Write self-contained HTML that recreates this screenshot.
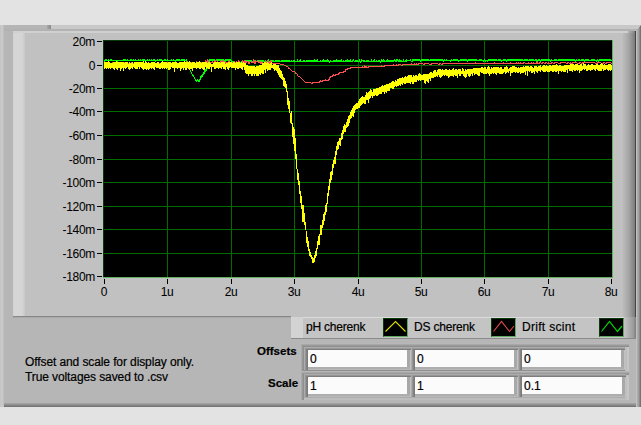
<!DOCTYPE html>
<html><head><meta charset="utf-8"><style>
*{margin:0;padding:0;box-sizing:border-box}
html,body{width:641px;height:425px;overflow:hidden;background:#e3e3e3;font-family:"Liberation Sans",sans-serif;color:#000;-webkit-text-stroke:0.2px #000}
.a{position:absolute}
.yl{position:absolute;right:546px;width:50px;text-align:right;font-size:12px;line-height:16px;letter-spacing:-0.3px;-webkit-text-stroke:0.05px #000}
.yt{position:absolute;left:97px;width:5px;height:1px;background:#000}
.xl{position:absolute;top:284px;width:40px;text-align:center;font-size:12px;line-height:16px;letter-spacing:-0.3px;-webkit-text-stroke:0.05px #000}
.xt{position:absolute;top:279px;width:1px;height:5px;background:#000}
.lt{position:absolute;top:317px;font-size:12px;line-height:20px;letter-spacing:-0.2px}
.sw{position:absolute;top:318px;width:25px;height:19px;background:#000;border-top:1px solid #0b3a0b;border-left:1px solid #0b3a0b;border-right:1px solid #5fa85f;border-bottom:1px solid #5fa85f}
.num{position:absolute;background:#fbfbfb;font-size:12px;line-height:19px;padding-left:2px}
</style></head><body>
<!-- outer frame -->
<div class="a" style="left:0;top:25px;width:641px;height:382px;background:#b6b6b6"></div>
<div class="a" style="left:0;top:25px;width:4px;height:382px;background:linear-gradient(90deg,#c2c2c2,#cbcbcb 50%,#bdbdbd)"></div>
<div class="a" style="left:4px;top:403px;width:637px;height:4px;background:linear-gradient(180deg,#a9a9a9,#6e6e6e)"></div>

<div class="a" style="left:4px;top:25px;width:44px;height:5px;background:#b5b5b5"></div>
<div class="a" style="left:47px;top:25px;width:4px;height:5px;background:linear-gradient(90deg,#a8a8a8,#8a8a8a)"></div>
<div class="a" style="left:51px;top:25px;width:590px;height:4px;background:#c8c8c8"></div>
<div class="a" style="left:4px;top:29px;width:637px;height:2px;background:#b2b2b2"></div>
<div class="a" style="left:636px;top:25px;width:5px;height:382px;clip-path:polygon(0 6px,5px 0,5px 100%,0 100%);background:linear-gradient(90deg,#c2c2c2 0,#c0c0c0 1px,#b2b2b2 1px,#9a9a9a 3px,#686868 5px)"></div>
<!-- plot panel -->
<div class="a" style="left:13px;top:31px;width:623px;height:286px;background:#c1c1c1"></div>
<div class="a" style="left:13px;top:31px;width:12px;height:286px;background:linear-gradient(90deg,#d2d2d2 0,#d6d6d6 2px,#d5d5d5 9px,#c8c8c8 12px)"></div>
<div class="a" style="left:621px;top:31px;width:15px;height:286px;background:linear-gradient(90deg,#c4c4c4 0,#a4a4a4 8px,#7e7e7e 13.5px,#444 14px,#444 15px)"></div>
<div class="a" style="left:13px;top:31px;width:615px;height:2px;background:#d0d0d0"></div>
<div class="a" style="left:628px;top:31px;width:6px;height:2px;background:linear-gradient(90deg,#b4b4b4,#8a8a8a)"></div>
<div class="a" style="left:13px;top:316px;width:278px;height:1px;background:#888888"></div><div class="a" style="left:13px;top:317px;width:278px;height:1px;background:#a9a9a9"></div>
<!-- y labels/ticks -->
<div class="yl" style="top:34px">20m</div><div class="yt" style="top:41px"></div><div class="yl" style="top:58px">0</div><div class="yt" style="top:65px"></div><div class="yl" style="top:81px">-20m</div><div class="yt" style="top:88px"></div><div class="yl" style="top:104px">-40m</div><div class="yt" style="top:111px"></div><div class="yl" style="top:128px">-60m</div><div class="yt" style="top:135px"></div><div class="yl" style="top:152px">-80m</div><div class="yt" style="top:159px"></div><div class="yl" style="top:175px">-100m</div><div class="yt" style="top:182px"></div><div class="yl" style="top:199px">-120m</div><div class="yt" style="top:206px"></div><div class="yl" style="top:222px">-140m</div><div class="yt" style="top:229px"></div><div class="yl" style="top:246px">-160m</div><div class="yt" style="top:253px"></div><div class="yl" style="top:269px">-180m</div><div class="yt" style="top:276px"></div>
<div class="xl" style="left:84px">0</div><div class="xt" style="left:104px"></div><div class="xl" style="left:147px">1u</div><div class="xt" style="left:167px"></div><div class="xl" style="left:211px">2u</div><div class="xt" style="left:231px"></div><div class="xl" style="left:274px">3u</div><div class="xt" style="left:294px"></div><div class="xl" style="left:338px">4u</div><div class="xt" style="left:358px"></div><div class="xl" style="left:401px">5u</div><div class="xt" style="left:421px"></div><div class="xl" style="left:464px">6u</div><div class="xt" style="left:484px"></div><div class="xl" style="left:528px">7u</div><div class="xt" style="left:548px"></div><div class="xl" style="left:591px">8u</div><div class="xt" style="left:611px"></div>
<!-- plot -->
<svg class="a" style="left:0;top:0" width="641" height="425" viewBox="0 0 641 425">
<rect x="103" y="40" width="510" height="238" fill="#5fb05f"/>
<rect x="103" y="40" width="509" height="237" fill="#0a3a0a"/>
<rect x="104" y="41" width="508" height="236" fill="#000"/>
<rect x="167" y="41" width="1" height="236" fill="#006c00"/><rect x="231" y="41" width="1" height="236" fill="#006c00"/><rect x="294" y="41" width="1" height="236" fill="#006c00"/><rect x="358" y="41" width="1" height="236" fill="#006c00"/><rect x="421" y="41" width="1" height="236" fill="#006c00"/><rect x="484" y="41" width="1" height="236" fill="#006c00"/><rect x="548" y="41" width="1" height="236" fill="#006c00"/><rect x="104" y="65" width="508" height="1" fill="#006c00"/><rect x="104" y="88" width="508" height="1" fill="#006c00"/><rect x="104" y="111" width="508" height="1" fill="#006c00"/><rect x="104" y="135" width="508" height="1" fill="#006c00"/><rect x="104" y="159" width="508" height="1" fill="#006c00"/><rect x="104" y="182" width="508" height="1" fill="#006c00"/><rect x="104" y="206" width="508" height="1" fill="#006c00"/><rect x="104" y="229" width="508" height="1" fill="#006c00"/><rect x="104" y="253" width="508" height="1" fill="#006c00"/>
<clipPath id="pc"><rect x="104" y="41" width="508" height="236"/></clipPath>
<g clip-path="url(#pc)" shape-rendering="crispEdges">
<path d="M104 60h1V62h-1zM105 59h1V61h-1zM106 59h1V61h-1zM107 60h1V61h-1zM108 59h1V61h-1zM109 60h1V61h-1zM110 59h1V61h-1zM111 59h1V61h-1zM112 60h1V61h-1zM113 60h1V61h-1zM114 60h1V61h-1zM115 60h1V61h-1zM116 60h1V61h-1zM117 60h1V62h-1zM118 60h1V61h-1zM119 60h1V61h-1zM120 60h1V61h-1zM121 60h1V61h-1zM122 60h1V61h-1zM123 59h1V61h-1zM124 59h1V61h-1zM125 59h1V61h-1zM126 60h1V61h-1zM127 59h1V61h-1zM128 60h1V61h-1zM129 60h1V61h-1zM130 59h1V61h-1zM131 59h1V61h-1zM132 60h1V61h-1zM133 59h1V61h-1zM134 60h1V61h-1zM135 59h1V61h-1zM136 60h1V61h-1zM137 60h1V61h-1zM138 59h1V61h-1zM139 60h1V61h-1zM140 59h1V61h-1zM141 60h1V61h-1zM142 59h1V61h-1zM143 59h1V61h-1zM144 59h1V61h-1zM145 60h1V62h-1zM146 60h1V61h-1zM147 59h1V61h-1zM148 60h1V61h-1zM149 59h1V61h-1zM150 60h1V61h-1zM151 59h1V61h-1zM152 60h1V61h-1zM153 59h1V61h-1zM154 59h1V61h-1zM155 60h1V62h-1zM156 60h1V61h-1zM157 59h1V61h-1zM158 60h1V61h-1zM159 59h1V61h-1zM160 59h1V61h-1zM161 59h1V61h-1zM162 60h1V61h-1zM163 60h1V61h-1zM164 59h1V61h-1zM165 59h1V61h-1zM166 60h1V61h-1zM167 59h1V61h-1zM168 60h1V61h-1zM169 60h1V61h-1zM170 60h1V61h-1zM171 59h1V61h-1zM172 60h1V61h-1zM173 59h1V61h-1zM174 60h1V61h-1zM175 60h1V62h-1zM176 59h1V61h-1zM177 59h1V61h-1zM178 59h1V61h-1zM179 59h1V61h-1zM180 60h1V61h-1zM181 59h1V61h-1zM182 59h1V61h-1zM183 59h1V61h-1zM184 59h1V61h-1zM185 60h1V61h-1zM186 59h1V61h-1zM187 61h1V64h-1zM188 64h1V67h-1zM189 67h1V70h-1zM190 70h1V72h-1zM191 72h1V74h-1zM192 74h1V76h-1zM193 75h1V77h-1zM194 77h1V79h-1zM195 79h1V81h-1zM196 80h1V82h-1zM197 79h1V81h-1zM198 80h1V82h-1zM199 79h1V82h-1zM200 76h1V80h-1zM201 75h1V78h-1zM202 74h1V77h-1zM203 72h1V75h-1zM204 70h1V74h-1zM205 69h1V72h-1zM206 68h1V71h-1zM207 64h1V69h-1zM208 62h1V66h-1zM209 59h1V64h-1zM210 59h1V61h-1zM211 59h1V61h-1zM212 59h1V61h-1zM213 59h1V61h-1zM214 59h1V61h-1zM215 60h1V62h-1zM216 59h1V61h-1zM217 59h1V61h-1zM218 59h1V61h-1zM219 59h1V61h-1zM220 59h1V61h-1zM221 59h1V61h-1zM222 59h1V61h-1zM223 59h1V61h-1zM224 60h1V62h-1zM225 59h1V61h-1zM226 59h1V61h-1zM227 59h1V61h-1zM228 59h1V61h-1zM229 59h1V61h-1zM230 59h1V61h-1zM231 60h1V62h-1zM232 61h1V63h-1zM233 61h1V63h-1zM234 62h1V63h-1zM235 62h1V63h-1zM236 62h1V64h-1zM237 62h1V64h-1zM238 62h1V64h-1zM239 61h1V64h-1zM240 62h1V64h-1zM241 61h1V64h-1zM242 62h1V63h-1zM243 61h1V63h-1zM244 61h1V62h-1zM245 60h1V62h-1zM246 60h1V62h-1zM247 60h1V62h-1zM248 60h1V62h-1zM249 60h1V62h-1zM250 60h1V62h-1zM251 60h1V62h-1zM252 61h1V62h-1zM253 61h1V62h-1zM254 61h1V62h-1zM255 60h1V62h-1zM256 61h1V62h-1zM257 60h1V62h-1zM258 60h1V62h-1zM259 60h1V62h-1zM260 60h1V62h-1zM261 60h1V62h-1zM262 60h1V62h-1zM263 60h1V62h-1zM264 61h1V62h-1zM265 60h1V62h-1zM266 61h1V62h-1zM267 60h1V62h-1zM268 59h1V62h-1zM269 61h1V63h-1zM270 60h1V62h-1zM271 60h1V62h-1zM272 60h1V62h-1zM273 60h1V62h-1zM274 61h1V62h-1zM275 60h1V62h-1zM276 60h1V62h-1zM277 60h1V62h-1zM278 60h1V62h-1zM279 60h1V62h-1zM280 61h1V62h-1zM281 60h1V62h-1zM282 60h1V62h-1zM283 60h1V62h-1zM284 60h1V62h-1zM285 60h1V62h-1zM286 60h1V62h-1zM287 60h1V62h-1zM288 60h1V62h-1zM289 60h1V62h-1zM290 61h1V62h-1zM291 60h1V62h-1zM292 61h1V62h-1zM293 60h1V62h-1zM294 60h1V62h-1zM295 61h1V62h-1zM296 61h1V62h-1zM297 59h1V62h-1zM298 61h1V62h-1zM299 60h1V62h-1zM300 59h1V62h-1zM301 61h1V62h-1zM302 61h1V62h-1zM303 60h1V62h-1zM304 60h1V62h-1zM305 61h1V62h-1zM306 60h1V62h-1zM307 60h1V62h-1zM308 60h1V62h-1zM309 60h1V62h-1zM310 60h1V62h-1zM311 60h1V62h-1zM312 60h1V62h-1zM313 60h1V62h-1zM314 59h1V62h-1zM315 60h1V62h-1zM316 60h1V62h-1zM317 59h1V62h-1zM318 61h1V62h-1zM319 61h1V62h-1zM320 60h1V62h-1zM321 61h1V62h-1zM322 60h1V62h-1zM323 59h1V62h-1zM324 60h1V62h-1zM325 60h1V62h-1zM326 60h1V62h-1zM327 59h1V62h-1zM328 60h1V62h-1zM329 61h1V63h-1zM330 60h1V62h-1zM331 61h1V62h-1zM332 61h1V62h-1zM333 60h1V62h-1zM334 60h1V62h-1zM335 60h1V62h-1zM336 59h1V62h-1zM337 60h1V62h-1zM338 60h1V62h-1zM339 60h1V62h-1zM340 60h1V62h-1zM341 59h1V62h-1zM342 61h1V62h-1zM343 60h1V62h-1zM344 61h1V62h-1zM345 60h1V62h-1zM346 60h1V62h-1zM347 59h1V62h-1zM348 60h1V62h-1zM349 60h1V62h-1zM350 59h1V62h-1zM351 61h1V62h-1zM352 60h1V62h-1zM353 59h1V61h-1zM354 61h1V62h-1zM355 60h1V62h-1zM356 60h1V62h-1zM357 60h1V62h-1zM358 61h1V62h-1zM359 59h1V62h-1zM360 61h1V63h-1zM361 59h1V62h-1zM362 60h1V61h-1zM363 60h1V62h-1zM364 60h1V62h-1zM365 61h1V62h-1zM366 60h1V62h-1zM367 60h1V62h-1zM368 60h1V62h-1zM369 61h1V62h-1zM370 61h1V62h-1zM371 59h1V62h-1zM372 61h1V62h-1zM373 60h1V62h-1zM374 59h1V62h-1zM375 61h1V62h-1zM376 60h1V62h-1zM377 61h1V62h-1zM378 60h1V62h-1zM379 60h1V62h-1zM380 61h1V63h-1zM381 59h1V62h-1zM382 60h1V62h-1zM383 59h1V62h-1zM384 60h1V62h-1zM385 61h1V62h-1zM386 60h1V62h-1zM387 59h1V62h-1zM388 60h1V62h-1zM389 60h1V62h-1zM390 60h1V62h-1zM391 60h1V62h-1zM392 60h1V62h-1zM393 60h1V62h-1zM394 59h1V61h-1zM395 60h1V62h-1zM396 59h1V62h-1zM397 59h1V61h-1zM398 60h1V62h-1zM399 59h1V62h-1zM400 60h1V62h-1zM401 60h1V62h-1zM402 61h1V62h-1zM403 59h1V62h-1zM404 61h1V62h-1zM405 60h1V62h-1zM406 59h1V62h-1zM407 60h1V61h-1zM408 60h1V61h-1zM409 60h1V61h-1zM410 59h1V61h-1zM411 61h1V62h-1zM412 59h1V62h-1zM413 59h1V61h-1zM414 59h1V61h-1zM415 59h1V61h-1zM416 59h1V61h-1zM417 59h1V61h-1zM418 59h1V61h-1zM419 59h1V61h-1zM420 60h1V62h-1zM421 59h1V61h-1zM422 59h1V61h-1zM423 59h1V61h-1zM424 59h1V61h-1zM425 59h1V61h-1zM426 59h1V61h-1zM427 59h1V61h-1zM428 59h1V61h-1zM429 60h1V61h-1zM430 59h1V61h-1zM431 59h1V61h-1zM432 59h1V61h-1zM433 59h1V61h-1zM434 59h1V61h-1zM435 59h1V61h-1zM436 59h1V61h-1zM437 59h1V61h-1zM438 59h1V61h-1zM439 59h1V61h-1zM440 59h1V61h-1zM441 59h1V61h-1zM442 59h1V61h-1zM443 60h1V62h-1zM444 59h1V61h-1zM445 60h1V61h-1zM446 59h1V61h-1zM447 60h1V61h-1zM448 60h1V61h-1zM449 60h1V61h-1zM450 60h1V62h-1zM451 59h1V61h-1zM452 60h1V61h-1zM453 59h1V61h-1zM454 59h1V61h-1zM455 59h1V61h-1zM456 59h1V61h-1zM457 59h1V61h-1zM458 60h1V62h-1zM459 60h1V61h-1zM460 59h1V61h-1zM461 59h1V61h-1zM462 59h1V61h-1zM463 59h1V61h-1zM464 59h1V61h-1zM465 59h1V61h-1zM466 59h1V61h-1zM467 60h1V62h-1zM468 59h1V61h-1zM469 59h1V61h-1zM470 59h1V61h-1zM471 59h1V61h-1zM472 59h1V61h-1zM473 59h1V61h-1zM474 59h1V61h-1zM475 59h1V61h-1zM476 59h1V61h-1zM477 60h1V61h-1zM478 60h1V61h-1zM479 59h1V61h-1zM480 59h1V61h-1zM481 59h1V61h-1zM482 60h1V61h-1zM483 60h1V62h-1zM484 59h1V61h-1zM485 60h1V62h-1zM486 60h1V61h-1zM487 60h1V62h-1zM488 59h1V61h-1zM489 59h1V61h-1zM490 59h1V61h-1zM491 59h1V61h-1zM492 59h1V61h-1zM493 59h1V61h-1zM494 59h1V61h-1zM495 59h1V61h-1zM496 59h1V61h-1zM497 60h1V61h-1zM498 59h1V61h-1zM499 59h1V61h-1zM500 59h1V61h-1zM501 60h1V62h-1zM502 60h1V61h-1zM503 59h1V61h-1zM504 59h1V61h-1zM505 59h1V61h-1zM506 60h1V62h-1zM507 59h1V61h-1zM508 59h1V61h-1zM509 59h1V61h-1zM510 59h1V61h-1zM511 59h1V61h-1zM512 59h1V61h-1zM513 59h1V61h-1zM514 59h1V61h-1zM515 59h1V61h-1zM516 59h1V61h-1zM517 59h1V61h-1zM518 59h1V61h-1zM519 59h1V61h-1zM520 59h1V61h-1zM521 59h1V61h-1zM522 59h1V61h-1zM523 60h1V61h-1zM524 59h1V61h-1zM525 59h1V61h-1zM526 59h1V61h-1zM527 59h1V61h-1zM528 60h1V61h-1zM529 59h1V61h-1zM530 59h1V61h-1zM531 59h1V61h-1zM532 59h1V61h-1zM533 59h1V61h-1zM534 60h1V61h-1zM535 59h1V61h-1zM536 59h1V61h-1zM537 60h1V62h-1zM538 59h1V61h-1zM539 59h1V61h-1zM540 60h1V62h-1zM541 59h1V61h-1zM542 59h1V61h-1zM543 59h1V61h-1zM544 59h1V61h-1zM545 59h1V61h-1zM546 59h1V61h-1zM547 59h1V61h-1zM548 59h1V61h-1zM549 59h1V61h-1zM550 60h1V62h-1zM551 59h1V61h-1zM552 60h1V61h-1zM553 60h1V61h-1zM554 59h1V61h-1zM555 59h1V61h-1zM556 59h1V61h-1zM557 60h1V61h-1zM558 59h1V61h-1zM559 59h1V61h-1zM560 59h1V61h-1zM561 59h1V61h-1zM562 59h1V61h-1zM563 59h1V61h-1zM564 59h1V61h-1zM565 59h1V61h-1zM566 59h1V61h-1zM567 59h1V61h-1zM568 59h1V61h-1zM569 59h1V61h-1zM570 59h1V61h-1zM571 59h1V61h-1zM572 59h1V61h-1zM573 59h1V61h-1zM574 59h1V61h-1zM575 60h1V62h-1zM576 59h1V61h-1zM577 60h1V61h-1zM578 59h1V61h-1zM579 59h1V61h-1zM580 60h1V61h-1zM581 59h1V61h-1zM582 59h1V61h-1zM583 59h1V61h-1zM584 60h1V62h-1zM585 59h1V61h-1zM586 59h1V61h-1zM587 59h1V61h-1zM588 59h1V61h-1zM589 60h1V61h-1zM590 60h1V61h-1zM591 59h1V61h-1zM592 59h1V61h-1zM593 59h1V61h-1zM594 59h1V61h-1zM595 60h1V61h-1zM596 60h1V62h-1zM597 59h1V61h-1zM598 60h1V62h-1zM599 59h1V61h-1zM600 59h1V61h-1zM601 59h1V61h-1zM602 59h1V61h-1zM603 59h1V61h-1zM604 59h1V61h-1zM605 59h1V61h-1zM606 59h1V61h-1zM607 59h1V61h-1zM608 59h1V61h-1zM609 59h1V61h-1zM610 59h1V61h-1zM611 60h1V61h-1z" fill="#00ff00"/>
<path d="M104 62h1V63h-1zM105 62h1V63h-1zM106 62h1V63h-1zM107 63h1V64h-1zM108 63h1V64h-1zM109 63h1V64h-1zM110 63h1V64h-1zM111 63h1V64h-1zM112 62h1V64h-1zM113 63h1V64h-1zM114 63h1V64h-1zM115 63h1V64h-1zM116 63h1V64h-1zM117 63h1V64h-1zM118 62h1V64h-1zM119 62h1V63h-1zM120 63h1V64h-1zM121 62h1V64h-1zM122 62h1V63h-1zM123 62h1V63h-1zM124 62h1V63h-1zM125 63h1V64h-1zM126 63h1V64h-1zM127 62h1V64h-1zM128 63h1V64h-1zM129 63h1V64h-1zM130 63h1V64h-1zM131 62h1V64h-1zM132 62h1V63h-1zM133 63h1V64h-1zM134 63h1V64h-1zM135 63h1V64h-1zM136 63h1V64h-1zM137 63h1V64h-1zM138 63h1V64h-1zM139 63h1V64h-1zM140 62h1V64h-1zM141 63h1V64h-1zM142 63h1V64h-1zM143 63h1V64h-1zM144 63h1V64h-1zM145 63h1V64h-1zM146 63h1V64h-1zM147 63h1V64h-1zM148 62h1V64h-1zM149 63h1V64h-1zM150 63h1V64h-1zM151 63h1V64h-1zM152 63h1V64h-1zM153 62h1V64h-1zM154 63h1V64h-1zM155 63h1V64h-1zM156 63h1V64h-1zM157 63h1V64h-1zM158 63h1V64h-1zM159 63h1V64h-1zM160 63h1V64h-1zM161 63h1V64h-1zM162 63h1V64h-1zM163 63h1V64h-1zM164 63h1V64h-1zM165 63h1V64h-1zM166 62h1V64h-1zM167 62h1V63h-1zM168 63h1V64h-1zM169 63h1V64h-1zM170 62h1V64h-1zM171 63h1V64h-1zM172 63h1V64h-1zM173 63h1V64h-1zM174 62h1V64h-1zM175 63h1V64h-1zM176 63h1V64h-1zM177 63h1V64h-1zM178 63h1V64h-1zM179 63h1V64h-1zM180 63h1V64h-1zM181 62h1V64h-1zM182 62h1V63h-1zM183 62h1V63h-1zM184 62h1V63h-1zM185 62h1V63h-1zM186 61h1V63h-1zM187 62h1V64h-1zM188 62h1V64h-1zM189 63h1V64h-1zM190 63h1V64h-1zM191 62h1V64h-1zM192 63h1V64h-1zM193 63h1V64h-1zM194 63h1V64h-1zM195 63h1V64h-1zM196 61h1V64h-1zM197 62h1V64h-1zM198 62h1V64h-1zM199 62h1V63h-1zM200 62h1V63h-1zM201 62h1V63h-1zM202 63h1V64h-1zM203 63h1V64h-1zM204 63h1V64h-1zM205 60h1V64h-1zM206 61h1V63h-1zM207 59h1V63h-1zM208 60h1V62h-1zM209 62h1V63h-1zM210 62h1V63h-1zM211 62h1V63h-1zM212 61h1V63h-1zM213 62h1V64h-1zM214 61h1V64h-1zM215 60h1V62h-1zM216 60h1V61h-1zM217 61h1V64h-1zM218 62h1V64h-1zM219 62h1V63h-1zM220 60h1V63h-1zM221 61h1V63h-1zM222 60h1V63h-1zM223 61h1V63h-1zM224 63h1V64h-1zM225 61h1V64h-1zM226 62h1V63h-1zM227 62h1V63h-1zM228 60h1V63h-1zM229 61h1V63h-1zM230 62h1V63h-1zM231 63h1V64h-1zM232 62h1V64h-1zM233 62h1V63h-1zM234 61h1V63h-1zM235 62h1V63h-1zM236 61h1V63h-1zM237 62h1V64h-1zM238 60h1V64h-1zM239 61h1V63h-1zM240 63h1V64h-1zM241 62h1V64h-1zM242 60h1V63h-1zM243 61h1V63h-1zM244 60h1V63h-1zM245 61h1V63h-1zM246 61h1V63h-1zM247 61h1V62h-1zM248 62h1V64h-1zM249 61h1V64h-1zM250 61h1V62h-1zM251 62h1V63h-1zM252 62h1V63h-1zM253 59h1V63h-1zM254 60h1V64h-1zM255 61h1V64h-1zM256 61h1V62h-1zM257 61h1V62h-1zM258 62h1V63h-1zM259 60h1V63h-1zM260 61h1V64h-1zM261 62h1V64h-1zM262 62h1V63h-1zM263 63h1V64h-1zM264 62h1V64h-1zM265 61h1V63h-1zM266 62h1V63h-1zM267 60h1V63h-1zM268 61h1V64h-1zM269 62h1V64h-1zM270 60h1V63h-1zM271 61h1V63h-1zM272 63h1V64h-1zM273 63h1V64h-1zM274 63h1V64h-1zM275 63h1V64h-1zM276 63h1V64h-1zM277 63h1V64h-1zM278 63h1V64h-1zM279 63h1V64h-1zM280 64h1V65h-1zM281 64h1V65h-1zM282 64h1V65h-1zM283 64h1V65h-1zM284 65h1V66h-1zM285 65h1V66h-1zM286 66h1V67h-1zM287 66h1V67h-1zM288 67h1V69h-1zM289 68h1V69h-1zM290 69h1V70h-1zM291 70h1V71h-1zM292 71h1V72h-1zM293 71h1V72h-1zM294 71h1V72h-1zM295 72h1V74h-1zM296 73h1V74h-1zM297 74h1V76h-1zM298 76h1V77h-1zM299 76h1V77h-1zM300 77h1V78h-1zM301 78h1V79h-1zM302 79h1V80h-1zM303 80h1V81h-1zM304 81h1V82h-1zM305 82h1V83h-1zM306 82h1V83h-1zM307 82h1V83h-1zM308 82h1V83h-1zM309 82h1V83h-1zM310 82h1V83h-1zM311 83h1V84h-1zM312 82h1V84h-1zM313 82h1V83h-1zM314 82h1V83h-1zM315 82h1V83h-1zM316 82h1V83h-1zM317 82h1V83h-1zM318 82h1V83h-1zM319 81h1V83h-1zM320 80h1V82h-1zM321 81h1V82h-1zM322 80h1V82h-1zM323 80h1V81h-1zM324 80h1V81h-1zM325 79h1V81h-1zM326 80h1V81h-1zM327 80h1V81h-1zM328 79h1V81h-1zM329 77h1V80h-1zM330 76h1V78h-1zM331 76h1V77h-1zM332 75h1V77h-1zM333 74h1V76h-1zM334 75h1V76h-1zM335 74h1V76h-1zM336 74h1V75h-1zM337 74h1V75h-1zM338 73h1V75h-1zM339 72h1V74h-1zM340 72h1V73h-1zM341 72h1V73h-1zM342 72h1V73h-1zM343 71h1V73h-1zM344 71h1V72h-1zM345 69h1V72h-1zM346 69h1V70h-1zM347 68h1V70h-1zM348 68h1V69h-1zM349 68h1V69h-1zM350 67h1V69h-1zM351 67h1V68h-1zM352 67h1V68h-1zM353 67h1V68h-1zM354 67h1V68h-1zM355 67h1V68h-1zM356 67h1V68h-1zM357 67h1V68h-1zM358 67h1V68h-1zM359 67h1V68h-1zM360 67h1V68h-1zM361 67h1V68h-1zM362 66h1V68h-1zM363 67h1V68h-1zM364 65h1V68h-1zM365 66h1V68h-1zM366 66h1V68h-1zM367 67h1V68h-1zM368 66h1V68h-1zM369 66h1V67h-1zM370 66h1V67h-1zM371 66h1V67h-1zM372 66h1V67h-1zM373 66h1V67h-1zM374 66h1V67h-1zM375 66h1V67h-1zM376 66h1V67h-1zM377 66h1V67h-1zM378 66h1V67h-1zM379 66h1V67h-1zM380 66h1V67h-1zM381 65h1V67h-1zM382 66h1V67h-1zM383 66h1V67h-1zM384 65h1V67h-1zM385 65h1V66h-1zM386 65h1V66h-1zM387 65h1V66h-1zM388 65h1V66h-1zM389 65h1V66h-1zM390 65h1V66h-1zM391 65h1V66h-1zM392 65h1V66h-1zM393 64h1V66h-1zM394 65h1V66h-1zM395 65h1V66h-1zM396 64h1V66h-1zM397 65h1V66h-1zM398 64h1V66h-1zM399 64h1V65h-1zM400 64h1V65h-1zM401 65h1V66h-1zM402 64h1V66h-1zM403 64h1V65h-1zM404 64h1V65h-1zM405 64h1V65h-1zM406 64h1V65h-1zM407 64h1V65h-1zM408 64h1V65h-1zM409 64h1V65h-1zM410 64h1V65h-1zM411 63h1V65h-1zM412 64h1V65h-1zM413 64h1V65h-1zM414 63h1V65h-1zM415 64h1V65h-1zM416 63h1V65h-1zM417 64h1V65h-1zM418 63h1V65h-1zM419 63h1V64h-1zM420 63h1V64h-1zM421 63h1V64h-1zM422 63h1V64h-1zM423 64h1V65h-1zM424 63h1V65h-1zM425 63h1V64h-1zM426 63h1V64h-1zM427 63h1V64h-1zM428 63h1V64h-1zM429 64h1V65h-1zM430 64h1V65h-1zM431 63h1V65h-1zM432 63h1V64h-1zM433 63h1V64h-1zM434 63h1V64h-1zM435 63h1V64h-1zM436 63h1V64h-1zM437 63h1V64h-1zM438 64h1V65h-1zM439 63h1V65h-1zM440 63h1V64h-1zM441 64h1V65h-1zM442 63h1V65h-1zM443 63h1V64h-1zM444 63h1V64h-1zM445 63h1V64h-1zM446 63h1V64h-1zM447 63h1V64h-1zM448 63h1V64h-1zM449 63h1V64h-1zM450 63h1V64h-1zM451 63h1V64h-1zM452 63h1V64h-1zM453 63h1V64h-1zM454 63h1V64h-1zM455 63h1V64h-1zM456 63h1V64h-1zM457 63h1V64h-1zM458 63h1V64h-1zM459 63h1V64h-1zM460 63h1V64h-1zM461 63h1V64h-1zM462 63h1V64h-1zM463 63h1V64h-1zM464 63h1V64h-1zM465 63h1V64h-1zM466 63h1V64h-1zM467 63h1V64h-1zM468 63h1V64h-1zM469 63h1V64h-1zM470 63h1V64h-1zM471 63h1V64h-1zM472 63h1V64h-1zM473 63h1V64h-1zM474 63h1V64h-1zM475 62h1V64h-1zM476 63h1V64h-1zM477 63h1V64h-1zM478 63h1V64h-1zM479 63h1V64h-1zM480 63h1V64h-1zM481 63h1V64h-1zM482 63h1V64h-1zM483 63h1V64h-1zM484 63h1V64h-1zM485 63h1V64h-1zM486 63h1V64h-1zM487 63h1V64h-1zM488 63h1V64h-1zM489 63h1V64h-1zM490 63h1V64h-1zM491 63h1V64h-1zM492 63h1V64h-1zM493 63h1V64h-1zM494 62h1V64h-1zM495 63h1V64h-1zM496 63h1V64h-1zM497 63h1V64h-1zM498 63h1V64h-1zM499 63h1V64h-1zM500 63h1V64h-1zM501 63h1V64h-1zM502 63h1V64h-1zM503 62h1V64h-1zM504 63h1V64h-1zM505 63h1V64h-1zM506 63h1V64h-1zM507 63h1V64h-1zM508 63h1V64h-1zM509 63h1V64h-1zM510 62h1V64h-1zM511 63h1V64h-1zM512 63h1V64h-1zM513 63h1V64h-1zM514 63h1V64h-1zM515 63h1V64h-1zM516 62h1V64h-1zM517 63h1V64h-1zM518 62h1V64h-1zM519 63h1V64h-1zM520 62h1V64h-1zM521 63h1V64h-1zM522 63h1V64h-1zM523 62h1V64h-1zM524 62h1V63h-1zM525 63h1V64h-1zM526 63h1V64h-1zM527 63h1V64h-1zM528 62h1V64h-1zM529 63h1V64h-1zM530 63h1V64h-1zM531 62h1V64h-1zM532 63h1V64h-1zM533 62h1V64h-1zM534 63h1V64h-1zM535 63h1V64h-1zM536 61h1V64h-1zM537 62h1V64h-1zM538 63h1V64h-1zM539 62h1V64h-1zM540 62h1V63h-1zM541 63h1V64h-1zM542 62h1V64h-1zM543 62h1V63h-1zM544 63h1V64h-1zM545 62h1V64h-1zM546 62h1V63h-1zM547 63h1V64h-1zM548 62h1V64h-1zM549 63h1V64h-1zM550 63h1V64h-1zM551 62h1V64h-1zM552 62h1V63h-1zM553 63h1V64h-1zM554 62h1V64h-1zM555 62h1V63h-1zM556 62h1V63h-1zM557 62h1V63h-1zM558 63h1V64h-1zM559 63h1V64h-1zM560 62h1V64h-1zM561 62h1V63h-1zM562 62h1V63h-1zM563 62h1V63h-1zM564 62h1V63h-1zM565 62h1V63h-1zM566 63h1V64h-1zM567 62h1V64h-1zM568 62h1V63h-1zM569 63h1V64h-1zM570 62h1V64h-1zM571 63h1V64h-1zM572 62h1V64h-1zM573 62h1V63h-1zM574 62h1V63h-1zM575 62h1V63h-1zM576 62h1V63h-1zM577 63h1V64h-1zM578 63h1V64h-1zM579 62h1V64h-1zM580 62h1V63h-1zM581 63h1V64h-1zM582 62h1V64h-1zM583 62h1V63h-1zM584 62h1V63h-1zM585 62h1V63h-1zM586 62h1V63h-1zM587 62h1V63h-1zM588 62h1V63h-1zM589 62h1V63h-1zM590 62h1V63h-1zM591 62h1V63h-1zM592 62h1V63h-1zM593 62h1V63h-1zM594 62h1V63h-1zM595 63h1V64h-1zM596 63h1V64h-1zM597 62h1V64h-1zM598 62h1V63h-1zM599 62h1V63h-1zM600 62h1V63h-1zM601 63h1V64h-1zM602 63h1V64h-1zM603 62h1V64h-1zM604 62h1V63h-1zM605 63h1V64h-1zM606 62h1V64h-1zM607 62h1V63h-1zM608 62h1V63h-1zM609 62h1V63h-1zM610 62h1V63h-1zM611 63h1V64h-1z" fill="#ff5050"/>
<path d="M104 62h1V69h-1zM105 62h1V68h-1zM106 62h1V69h-1zM107 62h1V68h-1zM108 61h1V69h-1zM109 62h1V68h-1zM110 63h1V69h-1zM111 63h1V68h-1zM112 63h1V68h-1zM113 62h1V69h-1zM114 62h1V70h-1zM115 62h1V68h-1zM116 61h1V69h-1zM117 62h1V70h-1zM118 62h1V68h-1zM119 62h1V68h-1zM120 62h1V71h-1zM121 62h1V69h-1zM122 62h1V68h-1zM123 62h1V71h-1zM124 63h1V68h-1zM125 62h1V69h-1zM126 62h1V68h-1zM127 62h1V67h-1zM128 64h1V69h-1zM129 62h1V70h-1zM130 63h1V69h-1zM131 63h1V68h-1zM132 62h1V69h-1zM133 64h1V67h-1zM134 62h1V68h-1zM135 62h1V69h-1zM136 62h1V69h-1zM137 62h1V69h-1zM138 62h1V67h-1zM139 62h1V69h-1zM140 62h1V67h-1zM141 62h1V68h-1zM142 62h1V69h-1zM143 61h1V70h-1zM144 63h1V69h-1zM145 61h1V69h-1zM146 62h1V70h-1zM147 63h1V69h-1zM148 62h1V70h-1zM149 63h1V69h-1zM150 63h1V68h-1zM151 62h1V69h-1zM152 62h1V68h-1zM153 62h1V69h-1zM154 62h1V70h-1zM155 63h1V67h-1zM156 63h1V68h-1zM157 62h1V68h-1zM158 62h1V68h-1zM159 64h1V69h-1zM160 63h1V69h-1zM161 62h1V68h-1zM162 61h1V69h-1zM163 62h1V68h-1zM164 62h1V69h-1zM165 62h1V68h-1zM166 62h1V69h-1zM167 63h1V68h-1zM168 62h1V70h-1zM169 62h1V70h-1zM170 62h1V69h-1zM171 63h1V67h-1zM172 62h1V68h-1zM173 62h1V68h-1zM174 62h1V72h-1zM175 62h1V68h-1zM176 62h1V68h-1zM177 63h1V69h-1zM178 63h1V68h-1zM179 62h1V68h-1zM180 62h1V71h-1zM181 62h1V69h-1zM182 62h1V68h-1zM183 62h1V70h-1zM184 61h1V68h-1zM185 62h1V70h-1zM186 62h1V70h-1zM187 62h1V68h-1zM188 62h1V69h-1zM189 61h1V70h-1zM190 62h1V69h-1zM191 63h1V69h-1zM192 62h1V71h-1zM193 62h1V68h-1zM194 62h1V68h-1zM195 63h1V68h-1zM196 62h1V69h-1zM197 62h1V68h-1zM198 62h1V68h-1zM199 61h1V69h-1zM200 62h1V69h-1zM201 63h1V68h-1zM202 62h1V69h-1zM203 62h1V70h-1zM204 62h1V70h-1zM205 62h1V67h-1zM206 62h1V69h-1zM207 63h1V68h-1zM208 62h1V69h-1zM209 62h1V69h-1zM210 63h1V67h-1zM211 64h1V72h-1zM212 64h1V67h-1zM213 63h1V67h-1zM214 62h1V69h-1zM215 62h1V69h-1zM216 62h1V68h-1zM217 62h1V68h-1zM218 62h1V69h-1zM219 62h1V68h-1zM220 63h1V68h-1zM221 62h1V69h-1zM222 62h1V67h-1zM223 62h1V69h-1zM224 62h1V69h-1zM225 64h1V70h-1zM226 63h1V67h-1zM227 63h1V69h-1zM228 62h1V70h-1zM229 62h1V68h-1zM230 62h1V67h-1zM231 62h1V68h-1zM232 63h1V68h-1zM233 62h1V68h-1zM234 62h1V68h-1zM235 63h1V70h-1zM236 62h1V68h-1zM237 62h1V69h-1zM238 62h1V69h-1zM239 62h1V68h-1zM240 63h1V68h-1zM241 62h1V69h-1zM242 63h1V70h-1zM243 62h1V67h-1zM244 63h1V70h-1zM245 63h1V73h-1zM246 65h1V74h-1zM247 65h1V74h-1zM248 66h1V76h-1zM249 66h1V74h-1zM250 66h1V74h-1zM251 66h1V76h-1zM252 66h1V76h-1zM253 66h1V74h-1zM254 66h1V76h-1zM255 67h1V74h-1zM256 66h1V76h-1zM257 66h1V76h-1zM258 66h1V76h-1zM259 65h1V74h-1zM260 65h1V75h-1zM261 65h1V73h-1zM262 63h1V74h-1zM263 63h1V74h-1zM264 62h1V70h-1zM265 62h1V73h-1zM266 63h1V69h-1zM267 62h1V71h-1zM268 63h1V70h-1zM269 64h1V70h-1zM270 63h1V70h-1zM271 62h1V68h-1zM272 65h1V68h-1zM273 64h1V69h-1zM274 64h1V71h-1zM275 64h1V70h-1zM276 65h1V71h-1zM277 65h1V73h-1zM278 65h1V75h-1zM279 68h1V77h-1zM280 70h1V78h-1zM281 71h1V79h-1zM282 74h1V80h-1zM283 77h1V86h-1zM284 78h1V87h-1zM285 81h1V88h-1zM286 84h1V92h-1zM287 91h1V105h-1zM288 98h1V109h-1zM289 101h1V113h-1zM290 113h1V123h-1zM291 111h1V124h-1zM292 123h1V137h-1zM293 127h1V144h-1zM294 129h1V151h-1zM295 138h1V159h-1zM296 154h1V169h-1zM297 169h1V180h-1zM298 173h1V185h-1zM299 181h1V194h-1zM300 191h1V203h-1zM301 196h1V209h-1zM302 205h1V222h-1zM303 205h1V222h-1zM304 213h1V225h-1zM305 222h1V230h-1zM306 231h1V243h-1zM307 237h1V247h-1zM308 241h1V251h-1zM309 249h1V256h-1zM310 252h1V257h-1zM311 255h1V259h-1zM312 257h1V263h-1zM313 258h1V263h-1zM314 255h1V262h-1zM315 251h1V258h-1zM316 248h1V256h-1zM317 241h1V249h-1zM318 236h1V245h-1zM319 234h1V245h-1zM320 225h1V235h-1zM321 225h1V235h-1zM322 220h1V228h-1zM323 214h1V225h-1zM324 212h1V221h-1zM325 205h1V215h-1zM326 203h1V212h-1zM327 193h1V204h-1zM328 186h1V196h-1zM329 179h1V190h-1zM330 172h1V183h-1zM331 171h1V180h-1zM332 164h1V175h-1zM333 160h1V168h-1zM334 157h1V164h-1zM335 151h1V164h-1zM336 146h1V155h-1zM337 142h1V150h-1zM338 141h1V149h-1zM339 138h1V145h-1zM340 138h1V146h-1zM341 133h1V140h-1zM342 130h1V139h-1zM343 126h1V134h-1zM344 124h1V132h-1zM345 125h1V132h-1zM346 122h1V128h-1zM347 119h1V127h-1zM348 116h1V126h-1zM349 115h1V123h-1zM350 112h1V119h-1zM351 110h1V118h-1zM352 108h1V116h-1zM353 106h1V117h-1zM354 105h1V113h-1zM355 104h1V110h-1zM356 103h1V109h-1zM357 103h1V109h-1zM358 101h1V108h-1zM359 99h1V108h-1zM360 98h1V106h-1zM361 97h1V105h-1zM362 96h1V104h-1zM363 97h1V103h-1zM364 97h1V104h-1zM365 95h1V104h-1zM366 92h1V100h-1zM367 93h1V100h-1zM368 92h1V103h-1zM369 91h1V99h-1zM370 89h1V98h-1zM371 90h1V96h-1zM372 92h1V98h-1zM373 89h1V96h-1zM374 89h1V96h-1zM375 89h1V95h-1zM376 88h1V96h-1zM377 88h1V96h-1zM378 88h1V95h-1zM379 87h1V94h-1zM380 87h1V94h-1zM381 86h1V94h-1zM382 85h1V92h-1zM383 86h1V92h-1zM384 85h1V94h-1zM385 85h1V92h-1zM386 84h1V93h-1zM387 84h1V91h-1zM388 84h1V91h-1zM389 83h1V91h-1zM390 83h1V88h-1zM391 82h1V88h-1zM392 81h1V89h-1zM393 81h1V89h-1zM394 82h1V87h-1zM395 80h1V86h-1zM396 81h1V87h-1zM397 79h1V86h-1zM398 79h1V86h-1zM399 78h1V85h-1zM400 78h1V86h-1zM401 78h1V84h-1zM402 77h1V85h-1zM403 78h1V83h-1zM404 77h1V84h-1zM405 76h1V84h-1zM406 77h1V83h-1zM407 76h1V83h-1zM408 75h1V83h-1zM409 75h1V83h-1zM410 75h1V84h-1zM411 75h1V82h-1zM412 77h1V84h-1zM413 75h1V84h-1zM414 76h1V82h-1zM415 75h1V82h-1zM416 75h1V82h-1zM417 76h1V80h-1zM418 74h1V81h-1zM419 73h1V80h-1zM420 74h1V81h-1zM421 75h1V80h-1zM422 75h1V80h-1zM423 74h1V80h-1zM424 74h1V83h-1zM425 74h1V84h-1zM426 74h1V81h-1zM427 74h1V82h-1zM428 74h1V83h-1zM429 73h1V79h-1zM430 72h1V81h-1zM431 72h1V78h-1zM432 73h1V78h-1zM433 71h1V78h-1zM434 70h1V77h-1zM435 70h1V77h-1zM436 72h1V76h-1zM437 70h1V77h-1zM438 69h1V75h-1zM439 69h1V77h-1zM440 69h1V78h-1zM441 70h1V77h-1zM442 69h1V76h-1zM443 70h1V75h-1zM444 70h1V76h-1zM445 69h1V75h-1zM446 69h1V76h-1zM447 70h1V76h-1zM448 70h1V78h-1zM449 69h1V77h-1zM450 70h1V76h-1zM451 70h1V76h-1zM452 69h1V76h-1zM453 68h1V77h-1zM454 70h1V75h-1zM455 69h1V76h-1zM456 69h1V76h-1zM457 70h1V78h-1zM458 69h1V74h-1zM459 69h1V76h-1zM460 69h1V76h-1zM461 71h1V74h-1zM462 68h1V74h-1zM463 69h1V76h-1zM464 71h1V77h-1zM465 69h1V78h-1zM466 70h1V77h-1zM467 69h1V74h-1zM468 69h1V76h-1zM469 69h1V77h-1zM470 69h1V76h-1zM471 69h1V74h-1zM472 69h1V76h-1zM473 68h1V73h-1zM474 68h1V75h-1zM475 68h1V74h-1zM476 68h1V74h-1zM477 68h1V75h-1zM478 68h1V76h-1zM479 68h1V76h-1zM480 68h1V72h-1zM481 67h1V73h-1zM482 67h1V73h-1zM483 68h1V74h-1zM484 67h1V74h-1zM485 67h1V74h-1zM486 69h1V74h-1zM487 67h1V73h-1zM488 66h1V74h-1zM489 67h1V76h-1zM490 69h1V74h-1zM491 67h1V74h-1zM492 68h1V73h-1zM493 67h1V74h-1zM494 67h1V73h-1zM495 67h1V74h-1zM496 67h1V75h-1zM497 67h1V73h-1zM498 67h1V73h-1zM499 68h1V74h-1zM500 67h1V74h-1zM501 67h1V74h-1zM502 69h1V74h-1zM503 69h1V73h-1zM504 67h1V72h-1zM505 67h1V74h-1zM506 66h1V73h-1zM507 67h1V72h-1zM508 69h1V73h-1zM509 68h1V71h-1zM510 67h1V76h-1zM511 67h1V73h-1zM512 66h1V73h-1zM513 66h1V72h-1zM514 66h1V72h-1zM515 67h1V73h-1zM516 67h1V72h-1zM517 68h1V73h-1zM518 67h1V73h-1zM519 68h1V72h-1zM520 67h1V74h-1zM521 67h1V73h-1zM522 67h1V73h-1zM523 66h1V73h-1zM524 67h1V72h-1zM525 66h1V75h-1zM526 66h1V71h-1zM527 66h1V76h-1zM528 66h1V71h-1zM529 67h1V72h-1zM530 66h1V71h-1zM531 66h1V73h-1zM532 67h1V73h-1zM533 68h1V72h-1zM534 66h1V74h-1zM535 66h1V71h-1zM536 66h1V72h-1zM537 67h1V73h-1zM538 66h1V71h-1zM539 66h1V71h-1zM540 65h1V72h-1zM541 67h1V70h-1zM542 66h1V71h-1zM543 65h1V72h-1zM544 65h1V72h-1zM545 66h1V72h-1zM546 65h1V71h-1zM547 66h1V72h-1zM548 66h1V72h-1zM549 65h1V72h-1zM550 65h1V71h-1zM551 66h1V71h-1zM552 65h1V72h-1zM553 65h1V72h-1zM554 65h1V71h-1zM555 65h1V72h-1zM556 64h1V72h-1zM557 65h1V71h-1zM558 66h1V74h-1zM559 65h1V71h-1zM560 65h1V71h-1zM561 66h1V72h-1zM562 66h1V71h-1zM563 66h1V72h-1zM564 65h1V72h-1zM565 65h1V72h-1zM566 65h1V70h-1zM567 65h1V73h-1zM568 65h1V69h-1zM569 65h1V71h-1zM570 64h1V71h-1zM571 64h1V71h-1zM572 64h1V72h-1zM573 64h1V70h-1zM574 65h1V71h-1zM575 64h1V71h-1zM576 64h1V70h-1zM577 64h1V71h-1zM578 65h1V70h-1zM579 65h1V73h-1zM580 64h1V71h-1zM581 64h1V71h-1zM582 66h1V70h-1zM583 63h1V69h-1zM584 64h1V70h-1zM585 64h1V69h-1zM586 66h1V71h-1zM587 65h1V71h-1zM588 64h1V70h-1zM589 65h1V70h-1zM590 65h1V71h-1zM591 64h1V70h-1zM592 64h1V70h-1zM593 65h1V69h-1zM594 65h1V70h-1zM595 65h1V71h-1zM596 64h1V69h-1zM597 64h1V70h-1zM598 65h1V71h-1zM599 65h1V71h-1zM600 64h1V71h-1zM601 63h1V71h-1zM602 64h1V69h-1zM603 65h1V71h-1zM604 64h1V70h-1zM605 65h1V70h-1zM606 65h1V69h-1zM607 65h1V70h-1zM608 64h1V71h-1zM609 64h1V70h-1zM610 64h1V71h-1zM611 65h1V70h-1z" fill="#ffff00"/>
</g>
</svg>
<!-- legend -->
<div class="a" style="left:291px;top:317px;width:345px;height:22px;background:#c4c4c4;border-top:1px solid #dcdcdc;border-bottom:1px solid #8a8a8a"></div>
<div class="a" style="left:291px;top:317px;width:12px;height:21px;background:#d3d3d3"></div>
<div class="a" style="left:624px;top:317px;width:12px;height:21px;background:linear-gradient(90deg,#c4c4c4,#9a9a9a 80%,#7a7a7a)"></div>
<div class="lt" style="left:306px">pH cherenk</div>
<div class="sw" style="left:383px"></div>
<div class="lt" style="left:414px">DS cherenk</div>
<div class="sw" style="left:491px"></div>
<div class="lt" style="left:522px;letter-spacing:0.3px">Drift scint</div>
<div class="sw" style="left:599px"></div>
<svg class="a" style="left:0;top:0" width="641" height="425" fill="none">
<polyline points="385.5,331.5 395.5,321.5 405.5,331.5" stroke="#e0e000" stroke-width="1.1"/>
<polyline points="493.5,331.5 501.5,321.5 509.5,331.5 514,326" stroke="#e84848" stroke-width="1.1"/>
<polyline points="601.5,331.5 609.5,321.5 617.5,331.5 622,326" stroke="#00d800" stroke-width="1.2"/>
</svg>
<!-- text -->
<div class="a" style="left:25px;top:355px;font-size:12px;line-height:15px;white-space:nowrap;letter-spacing:-0.1px">Offset and scale for display only.<br>True voltages saved to .csv</div>
<div class="a" style="left:257px;top:344px;font-size:11.5px;font-weight:bold;line-height:15px">Offsets</div>
<div class="a" style="left:268px;top:376px;font-size:11.5px;font-weight:bold;line-height:15px">Scale</div>
<!-- numeric controls -->
<div class="a" style="left:300px;top:343px;width:329px;height:29px;background:#ababab;box-shadow:inset 0 1px #b8b8b8,inset 1px 0 #b8b8b8,inset 0 2px #a8a8a8,inset 2px 0 #a8a8a8,inset 0 3px #9a9a9a,inset 3px 0 #9a9a9a,inset 0 4px #8e8e8e,inset 4px 0 #8e8e8e,inset -2px 0 #c6c6c6,inset -4px 0 #bebebe,inset 0 -2px #8e8e8e"></div><div class="a" style="left:304px;top:347px;width:107px;height:23px;box-shadow:inset 0 1px #acacac,inset 1px 0 #acacac,inset 0 2px #969696,inset 2px 0 #969696,inset 0 3px #7e7e7e,inset 3px 0 #848484,inset 4px 0 #7a7a7a,inset 0 -1px #bababa,inset -1px 0 #c2c2c2,inset 0 -3px #adadad,inset -4px 0 #a8a8a8"></div><div class="num" style="left:308px;top:350px;width:99px;height:17px">0</div><div class="a" style="left:411px;top:347px;width:107px;height:23px;box-shadow:inset 0 1px #acacac,inset 1px 0 #acacac,inset 0 2px #969696,inset 2px 0 #969696,inset 0 3px #7e7e7e,inset 3px 0 #848484,inset 4px 0 #7a7a7a,inset 0 -1px #bababa,inset -1px 0 #c2c2c2,inset 0 -3px #adadad,inset -4px 0 #a8a8a8"></div><div class="num" style="left:415px;top:350px;width:99px;height:17px">0</div><div class="a" style="left:518px;top:347px;width:107px;height:23px;box-shadow:inset 0 1px #acacac,inset 1px 0 #acacac,inset 0 2px #969696,inset 2px 0 #969696,inset 0 3px #7e7e7e,inset 3px 0 #848484,inset 4px 0 #7a7a7a,inset 0 -1px #bababa,inset -1px 0 #c2c2c2,inset 0 -3px #adadad,inset -4px 0 #a8a8a8"></div><div class="num" style="left:522px;top:350px;width:99px;height:17px">0</div><div class="a" style="left:300px;top:371px;width:329px;height:29px;background:#ababab;box-shadow:inset 0 1px #b8b8b8,inset 1px 0 #b8b8b8,inset 0 2px #a8a8a8,inset 2px 0 #a8a8a8,inset 0 3px #9a9a9a,inset 3px 0 #9a9a9a,inset 0 4px #8e8e8e,inset 4px 0 #8e8e8e,inset -2px 0 #c6c6c6,inset -4px 0 #bebebe,inset 0 -2px #bdbdbd"></div><div class="a" style="left:304px;top:374px;width:107px;height:23px;box-shadow:inset 0 1px #acacac,inset 1px 0 #acacac,inset 0 2px #969696,inset 2px 0 #969696,inset 0 3px #7e7e7e,inset 3px 0 #848484,inset 4px 0 #7a7a7a,inset 0 -1px #bababa,inset -1px 0 #c2c2c2,inset 0 -3px #adadad,inset -4px 0 #a8a8a8"></div><div class="num" style="left:308px;top:377px;width:99px;height:17px">1</div><div class="a" style="left:411px;top:374px;width:107px;height:23px;box-shadow:inset 0 1px #acacac,inset 1px 0 #acacac,inset 0 2px #969696,inset 2px 0 #969696,inset 0 3px #7e7e7e,inset 3px 0 #848484,inset 4px 0 #7a7a7a,inset 0 -1px #bababa,inset -1px 0 #c2c2c2,inset 0 -3px #adadad,inset -4px 0 #a8a8a8"></div><div class="num" style="left:415px;top:377px;width:99px;height:17px">1</div><div class="a" style="left:518px;top:374px;width:108px;height:23px;box-shadow:inset 0 1px #acacac,inset 1px 0 #acacac,inset 0 2px #969696,inset 2px 0 #969696,inset 0 3px #7e7e7e,inset 3px 0 #848484,inset 4px 0 #7a7a7a,inset 0 -1px #bababa,inset -1px 0 #c2c2c2,inset 0 -3px #adadad,inset -4px 0 #a8a8a8"></div><div class="num" style="left:522px;top:377px;width:100px;height:17px">0.1</div></body></html>
